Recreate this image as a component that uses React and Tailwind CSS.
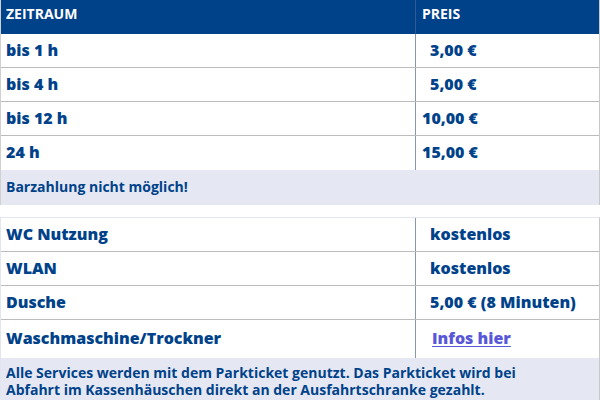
export default function App() {
  const rows = [
    ["bis 1 h", "3,00 €", true],
    ["bis 4 h", "5,00 €", true],
    ["bis 12 h", "10,00 €", false],
    ["24 h", "15,00 €", false],
  ];
  const services = [
    ["WC Nutzung", "kostenlos"],
    ["WLAN", "kostenlos"],
    ["Dusche", "5,00 € (8 Minuten)"],
  ];
  return (
    <div
      className="w-[600px] h-[400px] overflow-hidden bg-white text-[#00428a] font-bold"
      style={{ fontFamily: '"Open Sans", sans-serif' }}
    >
      {/* Table 1 */}
      <div className="border-l border-r border-l-[#d0d0d0] border-r-[#c8c8c8]">
        <div className="flex h-[34px] bg-[#00428a] text-white text-[14px]">
          <div className="w-[414px] pl-[5px] pt-[3px]">ZEITRAUM</div>
          <div className="flex-1 border-l border-[#35598e] pl-[6px] pt-[3px]">PREIS</div>
        </div>
        {rows.map(([a, b, pad], i) => (
          <div
            key={i}
            className={`flex h-[34px] text-[16px] font-extrabold ${i < rows.length - 1 ? "border-b border-[#bcbcbc]" : ""}`}
          >
            <div className="w-[414px] pl-[5px] flex items-center pb-[2px]">{a}</div>
            <div
              className={`flex-1 border-l border-[#8796b0] flex items-center pb-[2px] ${pad ? "pl-[14px]" : "pl-[6px]"}`}
            >
              {b}
            </div>
          </div>
        ))}
        <div className="h-[35px] bg-[#e5e8f3] text-[14px] pl-[5px] flex items-center pb-[2px]">
          Barzahlung nicht möglich!
        </div>
      </div>

      <div className="h-[12px]" />

      {/* Table 2 */}
      <div className="border-t border-l border-r border-t-[#e3e6f1] border-l-[#e3e6f1] border-r-[#c8c8c8]">
        {services.map(([a, b], i) => (
          <div key={i} className="flex h-[34px] text-[16px] font-extrabold border-b border-[#bcbcbc]">
            <div className="w-[414px] pl-[5px] flex items-center pb-[2px]">{a}</div>
            <div className="flex-1 border-l border-[#8796b0] pl-[14px] flex items-center pb-[2px]">
              {b}
            </div>
          </div>
        ))}
        <div className="flex h-[38px] text-[16px] font-extrabold">
          <div className="w-[414px] pl-[5px] flex items-center pb-[3px]">Waschmaschine/Trockner</div>
          <div className="flex-1 border-l border-[#8796b0] pl-[16px] flex items-center pb-[3px]">
            <a href="#" className="text-[#5757d8] underline underline-offset-[2px] decoration-1">
              Infos hier
            </a>
          </div>
        </div>
        <div className="bg-[#e5e8f3] text-[14px] leading-[17px] pl-[5px] pt-[6px] pb-[10px]">
          Alle Services werden mit dem Parkticket genutzt. Das Parkticket wird bei
          <br />
          Abfahrt im Kassenhäuschen direkt an der Ausfahrtschranke gezahlt.
        </div>
      </div>
    </div>
  );
}
